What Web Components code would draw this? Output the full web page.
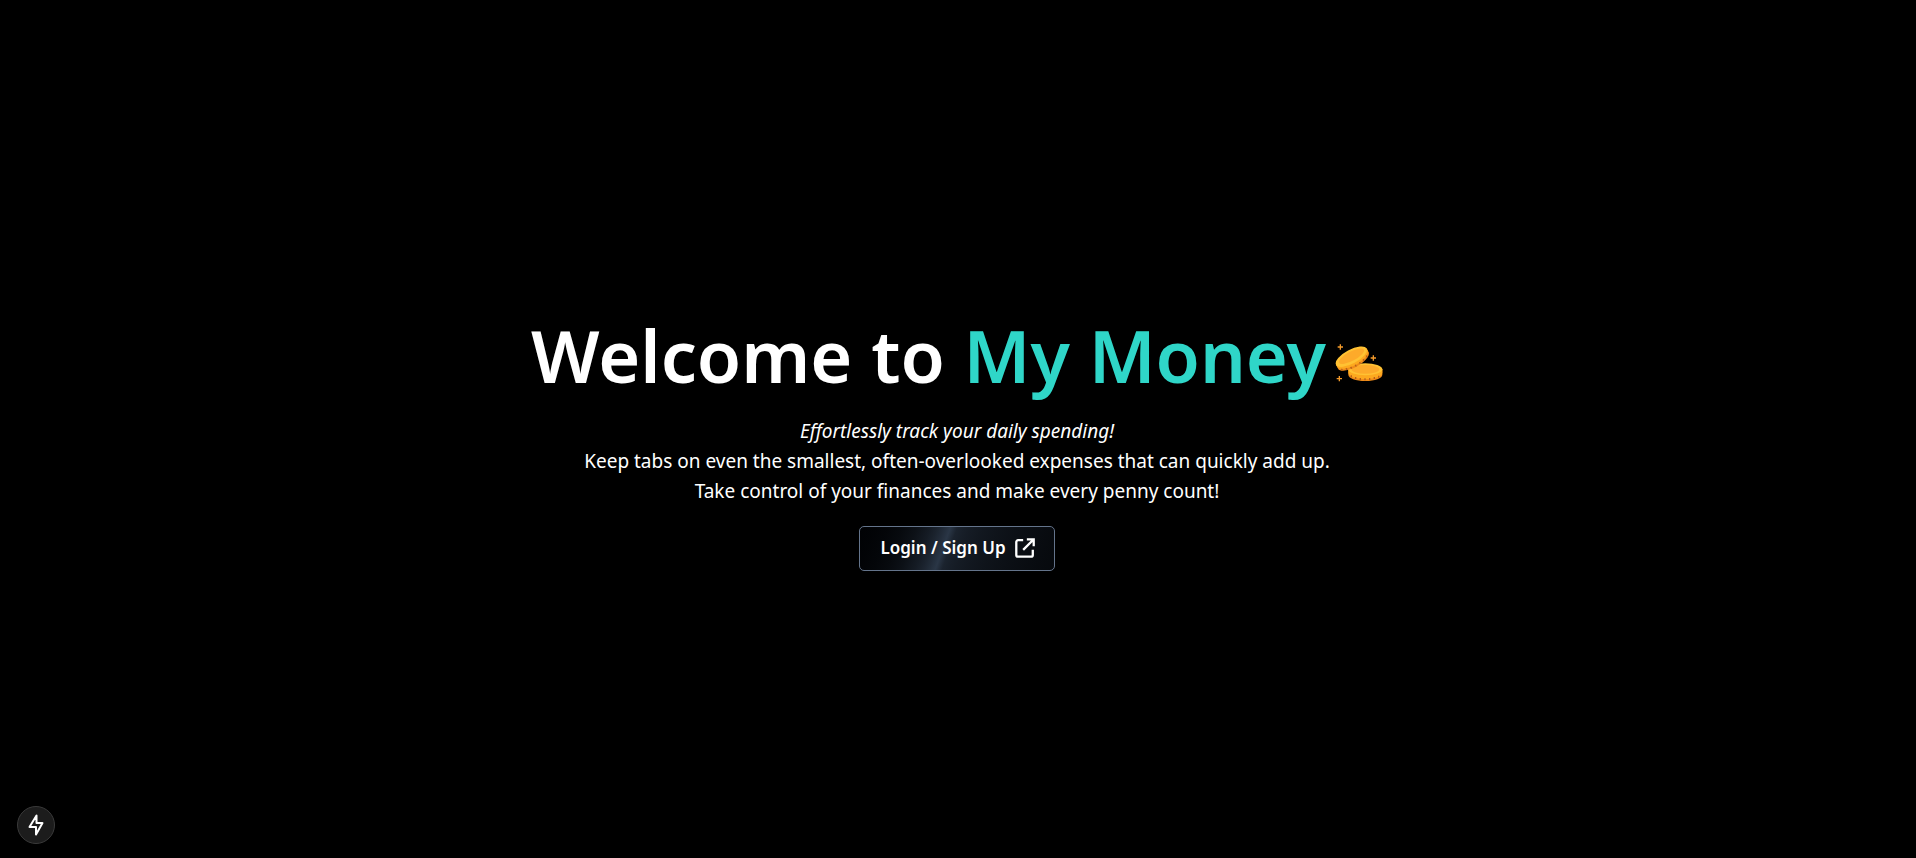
<!DOCTYPE html>
<html lang="en">
<head>
<meta charset="utf-8">
<meta name="viewport" content="width=device-width, initial-scale=1">
<title>My Money</title>
<style>
  body { margin: 0; background: #000; color: #fff; font-family: "Segoe UI", "Noto Sans", "Open Sans", sans-serif; }
</style>
</head>
<body>
<money-landing>
  <welcome-heading slot="title">Welcome to <span slot="brand">My Money</span></welcome-heading>
  <em slot="lead">Effortlessly track your daily spending!</em>
  <span slot="line">Keep tabs on even the smallest, often-overlooked expenses that can quickly add up.</span>
  <span slot="line">Take control of your finances and make every penny count!</span>
  <shimmer-button slot="action">Login / Sign Up</shimmer-button>
</money-landing>
<dev-indicator></dev-indicator>

<script>
function define(name, markup) {
  const template = document.createElement('template');
  template.innerHTML = markup;
  customElements.define(name, class extends HTMLElement {
    constructor() {
      super();
      this.attachShadow({ mode: 'open' }).append(template.content.cloneNode(true));
    }
  });
}

define('money-landing', `
  <style>
    :host { display: block; }
    main { min-height: 100vh; box-sizing: border-box; padding: 56px 18px 34px 16px; display: flex; flex-direction: column; align-items: center; justify-content: center; gap: 16px; text-align: center; }
    p { margin: 0 0 4px; font-size: 19px; line-height: 30px; }
    ::slotted([slot=lead]), ::slotted([slot=line]) { display: block; }
  </style>
  <main>
    <slot name="title"></slot>
    <p><slot name="lead"></slot><slot name="line"></slot></p>
    <slot name="action"></slot>
  </main>`);

define('coin-icon', `
  <style>
    :host { display: block; width: 48px; height: 48px; }
    svg { display: block; width: 100%; height: 100%; }
  </style>
  <svg viewBox="30 15 144 144" aria-hidden="true">
    <path d="M70 106v16c0 10 22 19 51 19s51-9 51-19v-16z" fill="#f08c1a"/>
    <path d="M70 106v10c0 10 22 19 51 19s51-9 51-19v-10z" fill="#fda91f"/>
    <ellipse cx="121" cy="106" rx="51" ry="18" fill="#ffc233"/>
    <ellipse cx="121" cy="106" rx="42" ry="13" fill="#fdaa2a"/>
    <path d="M79 124v6M92 129v6M106 132v6M120 133v6M134 132v6M148 129v6M161 125v6" stroke="#b8601a" stroke-width="4"/>
    <g transform="rotate(-28 80 72)">
      <path d="M29 68v13c0 11 23 21 51 21s53-10 53-21V68z" fill="#f08c1a"/>
      <path d="M29 68v7c0 11 23 21 51 21s53-10 53-21v-7z" fill="#fda91f"/>
      <ellipse cx="81" cy="68" rx="52" ry="21" fill="#ffc233"/>
      <ellipse cx="82" cy="67" rx="42" ry="14" fill="#fdaa2a"/>
      <path d="M38 86v6M51 91v6M65 94v6M80 95v6M95 94v6M109 91v6M122 86v6" stroke="#b8601a" stroke-width="4"/>
    </g>
    <path d="M46 31v16M38 39h16M145 64v16M137 72h16M43 126v16M35 134h16" stroke="#f39a2b" stroke-width="4"/>
  </svg>`);

define('welcome-heading', `
  <style>
    :host { display: block; }
    h1 { margin: 0; display: flex; flex-wrap: wrap; align-items: center; justify-content: center; gap: 9px; font-size: 72px; line-height: 90px; font-weight: 600; }
    .brand { color: #2fd6c8; }
    coin-icon { margin-top: 16px; }
  </style>
  <h1><span><slot></slot> <span class="brand"><slot name="brand"></slot></span></span><coin-icon></coin-icon></h1>`);

define('shimmer-button', `
  <style>
    :host { display: block; }
    button { display: flex; align-items: center; gap: 8px; height: 45px; padding: 0 18px 0 20px; border: 1px solid #64748b; border-radius: 5px; color: #fff; font: inherit; font-size: 17px; line-height: 24px; font-weight: 600; cursor: pointer;
      background: linear-gradient(110deg, #000103, 45%, #2a3646, 55%, #000103) 57% 0 / 200% 100%; }
    svg { display: block; width: 22px; height: 22px; }
  </style>
  <button type="button"><slot></slot>
    <svg viewBox="0 0 24 24" fill="none" stroke="#fff" stroke-width="2.5" aria-hidden="true"><path d="M10 3.500H4.500a2 2 0 0 0-2 2v14a2 2 0 0 0 2 2h14a2 2 0 0 0 2-2V14M10 14 21 3M14 2.500h7.500V10"/></svg>
  </button>`);

define('dev-indicator', `
  <style>
    :host { position: fixed; left: 17px; bottom: 14px; }
    button { display: grid; place-items: center; width: 38px; height: 38px; padding: 0; border: 1px solid #3a3a3a; border-radius: 50%; background: #1c1c1c; cursor: pointer; }
    svg { display: block; width: 24px; height: 24px; }
  </style>
  <button type="button" aria-label="Static route">
    <svg viewBox="0 0 24 24" fill="none" stroke="#fff" stroke-width="2" stroke-linejoin="round" aria-hidden="true"><path d="M12.500 2.500 5.500 14H12v7.500L18.500 10h-6z"/></svg>
  </button>`);
</script>
</body>
</html>
